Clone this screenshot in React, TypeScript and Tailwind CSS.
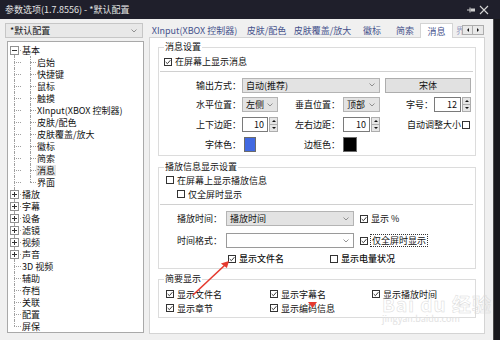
import React from 'react'

type Kid = { text: string; sel?: boolean }

const basic: Kid[] = [
  { text: '启始' },
  { text: '快捷键' },
  { text: '鼠标' },
  { text: '触摸' },
  { text: 'XInput(XBOX 控制器)' },
  { text: '皮肤/配色' },
  { text: '皮肤覆盖/放大' },
  { text: '徽标' },
  { text: '简索' },
  { text: '消息', sel: true },
  { text: '界面' },
]

const closedRoots = ['播放', '字幕', '设备', '滤镜', '视频', '声音']
const leafRoots = ['3D 视频', '辅助', '存档', '关联', '配置', '屏保']

function Check({ on }: { on?: boolean }) {
  return (
    <span className="flex h-[8px] w-[8px] shrink-0 items-center justify-center border border-[#333] bg-white">
      {on && (
        <svg viewBox="0 0 6 6" className="h-[6px] w-[6px]">
          <path d="M0.7 3 L2.4 4.7 L5.4 1.2" fill="none" stroke="#222" strokeWidth="0.9" />
        </svg>
      )}
    </span>
  )
}

function Chevron() {
  return (
    <svg viewBox="0 0 6 4" className="h-[4px] w-[6px] shrink-0">
      <path d="M0.5 0.5 L3 3 L5.5 0.5" fill="none" stroke="#7a7a7a" strokeWidth="0.8" />
    </svg>
  )
}

function Select({ text, className }: { text: string; className: string }) {
  return (
    <div className={`flex h-[15px] items-center border border-[#b4b4b4] bg-[#e3e3e3] pl-[3px] pr-[4px] ${className}`}>
      <span className="flex-1">{text}</span>
      <Chevron />
    </div>
  )
}

function Spin({ value, className }: { value: string; className: string }) {
  return (
    <div className={`flex h-[15px] ${className}`}>
      <div className="flex flex-1 items-center justify-end border border-[#7a7a7a] bg-white pr-[3px]">{value}</div>
      <div className="ml-[1px] flex w-[9px] flex-col">
        <div className="flex flex-1 items-center justify-center border border-[#adadad] bg-[#e6e6e6]">
          <svg viewBox="0 0 4 2" className="h-[2px] w-[4px]">
            <path d="M0 2 L2 0 L4 2 Z" fill="#111" />
          </svg>
        </div>
        <div className="flex flex-1 items-center justify-center border border-t-0 border-[#adadad] bg-[#e6e6e6]">
          <svg viewBox="0 0 4 2" className="h-[2px] w-[4px]">
            <path d="M0 0 L4 0 L2 2 Z" fill="#111" />
          </svg>
        </div>
      </div>
    </div>
  )
}

function CheckLabel({ on, text, className = '' }: { on?: boolean; text: string; className?: string }) {
  return (
    <div className={`flex items-center gap-[3px] ${className}`}>
      <Check on={on} />
      <span>{text}</span>
    </div>
  )
}

// root-level gutter: vertical dotted line at x=6, optional expander box
function RootGutter({ first, last, box }: { first?: boolean; last?: boolean; box?: '+' | '-' }) {
  return (
    <div className="relative h-[12px] w-[13px] shrink-0">
      <div
        className={`absolute left-[6px] w-0 border-l border-dotted border-[#a0a0a0] ${
          first ? 'top-[6px] bottom-0' : last ? 'top-0 h-[6px]' : 'top-0 bottom-0'
        }`}
      />
      <div className="absolute left-[6px] right-0 top-[6px] h-0 border-t border-dotted border-[#a0a0a0]" />
      {box && (
        <div className="absolute left-[2px] top-[2px] flex h-[9px] w-[9px] items-center justify-center border border-[#919191] bg-white">
          <div className="relative h-[5px] w-[5px]">
            <div className="absolute left-0 right-0 top-[2px] h-px bg-[#333]" />
            {box === '+' && <div className="absolute bottom-0 left-[2px] top-0 w-px bg-[#333]" />}
          </div>
        </div>
      )}
    </div>
  )
}

function Tree() {
  return (
    <div className="ml-[2px] mt-[3px] h-[292px] w-[137px] border border-[#a9a9a9] bg-white pt-[2px]">
      <div className="flex h-[12px] items-center">
        <RootGutter first box="-" />
        <span className="pl-[1px]">基本</span>
      </div>
      {basic.map((k, i) => (
        <div key={k.text} className="flex h-[12px] items-center">
          <RootGutter />
          <div className="relative h-[12px] w-[15px] shrink-0">
            <div
              className={`absolute left-[9px] w-0 border-l border-dotted border-[#a0a0a0] ${
                i === basic.length - 1 ? 'top-0 h-[6px]' : 'top-0 bottom-0'
              }`}
            />
            <div className="absolute left-[9px] right-0 top-[6px] h-0 border-t border-dotted border-[#a0a0a0]" />
          </div>
          <span className={`px-[1px] ${k.sel ? 'bg-[#e5e5e5]' : ''}`}>{k.text}</span>
        </div>
      ))}
      {closedRoots.map((t) => (
        <div key={t} className="flex h-[12px] items-center">
          <RootGutter box="+" />
          <span className="pl-[1px]">{t}</span>
        </div>
      ))}
      {leafRoots.map((t, i) => (
        <div key={t} className="flex h-[12px] items-center">
          <RootGutter last={i === leafRoots.length - 1} />
          <span className="pl-[1px]">{t}</span>
        </div>
      ))}
    </div>
  )
}

function Tabs() {
  return (
    <div className="flex h-[14px] items-start text-[#46528c]">
      <div className="flex h-[14px] w-[91px] items-center justify-center">XInput(XBOX 控制器)</div>
      <div className="flex h-[14px] w-[53px] items-center justify-center">皮肤/配色</div>
      <div className="flex h-[14px] w-[59px] items-center justify-center">皮肤覆盖/放大</div>
      <div className="flex h-[14px] w-[40px] items-center justify-center">徽标</div>
      <div className="flex h-[14px] w-[26px] items-center justify-center">简索</div>
      <div className="relative z-10 ml-[2px] flex h-[15px] w-[33px] items-center justify-center border border-b-0 border-[#d4d4d4] bg-white">
        消息
      </div>
      {/* next tab, mostly hidden behind the scroll arrows */}
      <div className="h-[14px] w-[9px] overflow-hidden">
        <div className="flex h-[14px] w-[30px] items-center pl-[3px] text-[#9aa0c4]">界面</div>
      </div>
      <div className="mt-[2px] flex h-[10px]">
        <div className="flex w-[11px] items-center justify-center border border-[#adadad] bg-[#e9e9e9]">
          <svg viewBox="0 0 2 4" className="h-[4px] w-[2px]">
            <path d="M2 0 L0 2 L2 4 Z" fill="#111" />
          </svg>
        </div>
        <div className="flex w-[11px] items-center justify-center border border-l-0 border-[#adadad] bg-[#e9e9e9]">
          <svg viewBox="0 0 2 4" className="h-[4px] w-[2px]">
            <path d="M0 0 L2 2 L0 4 Z" fill="#111" />
          </svg>
        </div>
      </div>
    </div>
  )
}

function MessageGroup() {
  return (
    <fieldset className="border border-[#dcdcdc] pb-[3px]">
      <legend className="ml-[5px] px-[1px] leading-[10px]">消息设置</legend>
      <div className="flex h-[19px] items-center pl-[5px]">
        <CheckLabel on text="在屏幕上显示消息" />
      </div>
      <div className="ml-[1px] mr-[2px] h-px bg-[#d0d0d0]" />
      <div className="mt-[5px] flex h-[16px] items-center">
        <span className="w-[82px] text-right">输出方式：</span>
        <Select text="自动(推荐)" className="ml-[1px] w-[138px]" />
        <div className="ml-[5px] flex h-[15px] w-[86px] items-center justify-center border border-[#adadad] bg-[#e1e1e1]">
          宋体
        </div>
      </div>
      <div className="mt-[4px] flex h-[15px] items-center">
        <span className="w-[82px] text-right">水平位置：</span>
        <Select text="左侧" className="ml-[1px] w-[36px]" />
        <span className="w-[62px] text-right">垂直位置：</span>
        <Select text="顶部" className="ml-[3px] w-[37px]" />
        <span className="w-[53px] text-right">字号：</span>
        <Spin value="12" className="ml-[1px] w-[37px]" />
      </div>
      <div className="mt-[5px] flex h-[15px] items-center">
        <span className="w-[82px] text-right">上下边距：</span>
        <Spin value="10" className="ml-[1px] w-[36px]" />
        <span className="w-[62px] text-right">左右边距：</span>
        <Spin value="10" className="ml-[3px] w-[37px]" />
        <span className="ml-[27px]">自动调整大小</span>
        <span className="ml-[1px]">
          <Check />
        </span>
      </div>
      <div className="mt-[5px] flex h-[15px] items-center">
        <span className="w-[82px] text-right">字体色：</span>
        <div className="ml-[3px] h-[15px] w-[12px] border border-[#6b6b6b] bg-[#4169e1]" />
        <span className="w-[84px] text-right">边框色：</span>
        <div className="ml-[3px] h-[15px] w-[14px] border border-[#6b6b6b] bg-black" />
      </div>
    </fieldset>
  )
}

function PlayGroup() {
  return (
    <fieldset className="mt-[6px] border border-[#dcdcdc] pb-[2px]">
      <legend className="ml-[5px] px-[1px] leading-[10px]">播放信息显示设置</legend>
      <div className="flex h-[16px] items-center pl-[7px]">
        <CheckLabel text="在屏幕上显示播放信息" />
      </div>
      <div className="flex h-[12px] items-center pl-[18px]">
        <CheckLabel text="仅全屏时显示" />
      </div>
      <div className="ml-[1px] mr-[2px] mt-[4px] h-px bg-[#d0d0d0]" />
      <div className="mt-[6px] flex h-[15px] items-center">
        <span className="w-[63px] text-right">播放时间：</span>
        <Select text="播放时间" className="ml-[4px] w-[128px]" />
        <CheckLabel on text="显示 %" className="ml-[6px]" />
      </div>
      <div className="mt-[7px] flex h-[15px] items-center">
        <span className="w-[63px] text-right">时间格式：</span>
        <div className="ml-[4px] flex h-[15px] w-[128px] items-center justify-end border border-[#9a9a9a] bg-white pr-[4px]">
          <Chevron />
        </div>
        <div className="ml-[6px] flex items-center gap-[2px]">
          <Check on />
          <span className="border border-dotted border-[#333] px-[1px] leading-[11px]">仅全屏时显示</span>
        </div>
      </div>
      <div className="mt-[3px] flex h-[15px] items-center pl-[69px] font-medium">
        <CheckLabel on text="显示文件名" className="w-[102px]" />
        <CheckLabel text="显示电量状况" />
      </div>
    </fieldset>
  )
}

function BriefGroup() {
  return (
    <fieldset className="mt-[5px] border border-[#dcdcdc] pb-[2px] pt-[3px]">
      <legend className="ml-[5px] px-[1px] leading-[10px]">简要显示</legend>
      <div className="flex h-[14px] items-center pl-[7px]">
        <CheckLabel on text="显示文件名" className="w-[104px]" />
        <CheckLabel on text="显示字幕名" className="w-[102px]" />
        <CheckLabel on text="显示播放时间" />
      </div>
      <div className="flex h-[14px] items-center pl-[7px]">
        <CheckLabel on text="显示章节" className="w-[104px]" />
        <CheckLabel on text="显示编码信息" />
      </div>
    </fieldset>
  )
}

export default function App() {
  return (
    <div className="relative flex h-[340px] w-[500px] flex-col overflow-hidden bg-[#1c1c22] font-['Noto_Sans_CJK_SC',sans-serif] text-[9px] leading-[11px] text-[#111]">
      <div className="flex h-[19px] shrink-0 items-center bg-[#1f1f2b] pl-[5px] pr-[11px] text-[9px] text-[#e4e4e4]">
        <span className="flex-1">参数选项(1.7.8556) - *默认配置</span>
        <svg viewBox="0 0 8 6" className="mr-[4px] h-[6px] w-[8px]">
          <path d="M0 3 H3" stroke="#cfcfcf" strokeWidth="1" />
          <path d="M3 0.5 V5.5" stroke="#cfcfcf" strokeWidth="1" />
          <rect x="3.5" y="1.5" width="4.5" height="3" fill="#cfcfcf" />
        </svg>
        <svg viewBox="0 0 10 10" className="h-[10px] w-[10px]">
          <path d="M1 1 L9 9 M9 1 L1 9" stroke="#d4d4d4" strokeWidth="1.1" />
        </svg>
      </div>
      <div className="flex flex-1">
        <div className="flex w-[493px] bg-[#f0f0f0] pl-[5px] pt-[4px]">
          <div className="flex w-[139px] flex-col">
            <div className="flex h-[15px] w-[138px] items-center border border-[#c6c6c6] bg-[#e8e8e8] pl-[4px] pr-[5px]">
              <span className="flex-1">*默认配置</span>
              <Chevron />
            </div>
            <Tree />
          </div>
          <div className="ml-[5px] flex w-[336px] flex-col">
            <Tabs />
            <div className="h-[297px] border border-[#d4d4d4] bg-white px-[8px] pt-[4px]">
              <MessageGroup />
              <PlayGroup />
              <BriefGroup />
            </div>
          </div>
        </div>
        <div className="flex-1 border-l border-[#4a4a4a] bg-[#18181c]" />
      </div>

      {/* watermark */}
      <div className="pointer-events-none absolute left-[382px] top-[294px] flex flex-col items-start text-transparent">
        <span className="text-[19px] font-bold leading-[20px] tracking-[1px] [-webkit-text-stroke:0.5px_#dadada]">
          Bai du 经验
        </span>
        <span className="text-[9px] leading-[10px] text-[#e2e2e2]">jingyan.baidu.com</span>
      </div>

      {/* red annotation */}
      <svg className="pointer-events-none absolute left-0 top-0 h-[340px] w-[500px]" viewBox="0 0 500 340">
        <path d="M193 295 L225 265" stroke="#e53a2f" strokeWidth="1.6" />
        <polygon points="229,261 226.9,268 220.9,263.6" fill="#e53a2f" />
        <polygon points="308,302 317,302 312.5,308" fill="#e53a2f" />
      </svg>
    </div>
  )
}
